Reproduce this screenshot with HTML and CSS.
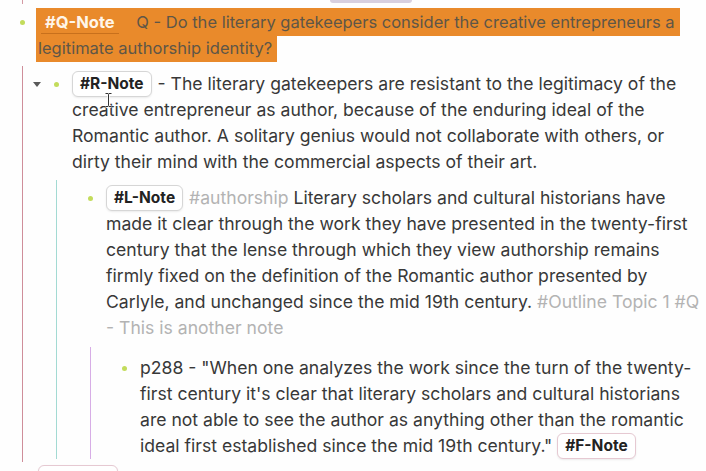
FILE: index.html
```html
<!DOCTYPE html>
<html>
<head>
<meta charset="utf-8">
<link rel="stylesheet" href="styles.css">
</head>
<body>
<div class="page">
  <div class="prev"><span class="prev-line"></span><span class="prev-tag"></span></div>

  <div class="block first">
    <div class="row">
      <span class="bullet"><span class="dot"></span></span>
      <div class="content"><span class="hl"><span class="tag-q">#Q-Note</span> Q - Do the literary gatekeepers consider the creative entrepreneurs a<br>legitimate authorship identity?</span></div>
    </div>

    <div class="children line-pink">
      <div class="block">
        <div class="row">
          <span class="caret"></span>
          <span class="bullet"><span class="dot"></span></span>
          <div class="content"><span class="tag">#R-Note</span> - The literary gatekeepers are resistant to the legitimacy of the<br>creative entrepreneur as author, because of the enduring ideal of the<br>Romantic author. A solitary genius would not collaborate with others, or<br>dirty their mind with the commercial aspects of their art.</div>
          <svg class="cursor" width="9" height="16" viewBox="0 0 9 16"><path d="M1.5 1.5h2.5l.5.6.5-.6h2.5M4.5 2.2v11.6M1.5 14.5h2.5l.5-.6.5.6h2.5" fill="none" stroke="#fff" stroke-width="2.4"/><path d="M1.5 1.5h2.5l.5.6.5-.6h2.5M4.5 2.2v11.6M1.5 14.5h2.5l.5-.6.5.6h2.5" fill="none" stroke="#333" stroke-width="1"/></svg>
        </div>

        <div class="children line-teal">
          <div class="block">
            <div class="row">
              <span class="bullet"><span class="dot"></span></span>
              <div class="content"><span class="tag">#L-Note</span> <span class="ref">#authorship</span> Literary scholars and cultural historians have<br>made it clear through the work they have presented in the twenty-first<br>century that the lense through which they view authorship remains<br>firmly fixed on the definition of the Romantic author presented by<br>Carlyle, and unchanged since the mid 19th century. <span class="ref">#Outline Topic 1 #Q</span><br><span class="ref">- This is another note</span></div>
            </div>

            <div class="children line-purple deep">
              <div class="block">
                <div class="row">
                  <span class="bullet"><span class="dot"></span></span>
                  <div class="content">p288 - "When one analyzes the work since the turn of the twenty-<br>first century it's clear that literary scholars and cultural historians<br>are not able to see the author as anything other than the romantic<br>ideal first established since the mid 19th century." <span class="tag tag-pink">#F-Note</span></div>
                </div>
              </div>
            </div>
          </div>
        </div>
      </div>
    </div>
  </div>

  <div class="block next">
    <div class="row">
      <span class="bullet"></span>
      <div class="content"><span class="tag tag-pink tag-empty"></span></div>
    </div>
  </div>
</div>
</body>
</html>
```

FILE: styles.css
```css
html, body {
  margin: 0;
  padding: 0;
  background: #fefefe;
}

.page {
  height: 471px;
  overflow: hidden;
  padding-left: 16px;
  font-family: Inter, "Noto Sans", sans-serif;
  font-size: 17.6px;
  line-height: 26px;
  color: #383838;
  box-sizing: border-box;
}

.prev {
  display: flex;
  height: 4px;
}

.prev-line {
  margin-left: 6px;
  width: 1px;
  height: 4px;
  background: #d49aa4;
}

.prev-tag {
  margin-left: 307px;
  width: 82px;
  height: 3px;
  background: #d8d0e0;
  border-radius: 0 0 4px 4px;
}

.block {
  display: flex;
  flex-direction: column;
}

.block.first {
  margin-top: 5px;
}

.row {
  position: relative;
  display: flex;
  align-items: flex-start;
}

.bullet {
  flex: 0 0 22px;
  height: 26px;
  display: flex;
  align-items: center;
}

.dot {
  margin-left: 4px;
  width: 5px;
  height: 5px;
  border-radius: 50%;
  background: #c3dc5c;
}

.caret {
  position: absolute;
  left: -17px;
  top: 11px;
  width: 0;
  height: 0;
  border-left: 4px solid transparent;
  border-right: 4px solid transparent;
  border-top: 5px solid #5a5a5a;
}

.cursor {
  position: absolute;
  left: 54px;
  top: 21px;
}

.content {
  flex: 1;
  white-space: nowrap;
}

.hl {
  margin-left: -2px;
  font-size: 16.5px;
  background: #e98a2b;
  color: #5e5647;
  padding: 4px 5px 4px 2px;
  -webkit-box-decoration-break: clone;
  box-decoration-break: clone;
}

.tag-q {
  display: inline-block;
  margin: 0 13px 0 3px;
  padding: 0 4px;
  line-height: 22px;
  font-weight: 700;
  font-size: 16.5px;
  color: #fff6ea;
  border-bottom: 1px solid #c8701c;
}

.tag {
  display: inline-block;
  vertical-align: top;
  box-sizing: border-box;
  height: 26px;
  line-height: 24px;
  padding: 0 7px;
  margin-right: 1px;
  font-size: 15.5px;
  font-weight: 700;
  color: #222;
  background: #fff;
  border: 1px solid #d6d6d6;
  border-radius: 6px;
  box-shadow: 0 1px 2px rgba(0, 0, 0, 0.08);
}

.tag-pink {
  border-color: #e6c9d2;
}

.tag-empty {
  width: 80px;
}

.ref {
  color: #b3b3b3;
}

.children {
  margin-top: 5px;
  margin-left: 6px;
  padding: 5px 0 3px 27px;
  border-left: 1px solid;
}

.children.deep {
  margin-top: 6px;
  padding-top: 8px;
}

.line-pink { border-left-color: #cf8e9a; }
.line-teal { border-left-color: #a3dad3; }
.line-purple { border-left-color: #d7ade6; }

.children .children {
  padding-bottom: 0;
}

.next {
  margin-top: 3px;
}
```
